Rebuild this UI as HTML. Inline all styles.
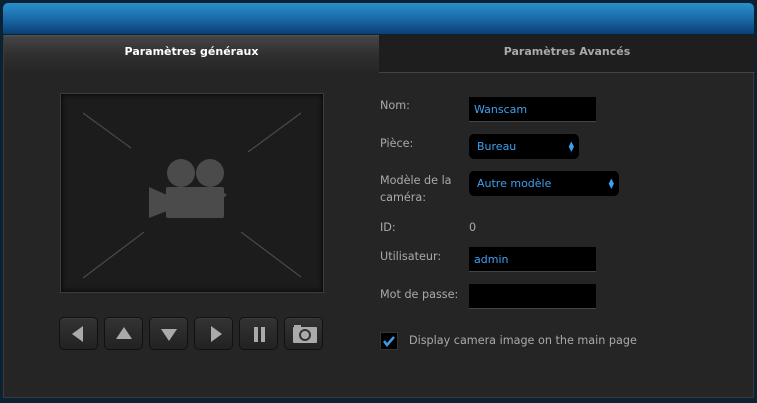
<!DOCTYPE html>
<html><head><style>
*{margin:0;padding:0;box-sizing:border-box}
body{width:757px;height:403px;background:#0b2233;position:relative;overflow:hidden;font-family:"DejaVu Sans","Liberation Sans",sans-serif;font-size:11px}
.hdr{position:absolute;left:3px;top:3px;width:751px;height:31px;border-radius:5px 5px 0 0;background:linear-gradient(#2a8fc8,#1a6aa8 50%,#0b3f75)}
.panel{position:absolute;left:3px;top:35px;width:751px;height:363px;background:#252525;border:1px solid #3a3a3a;border-top:none}
.t1{position:absolute;left:0;top:0;width:375px;height:37px;background:linear-gradient(#555 0,#444 2px,#2f2f2f 20px,#262626);color:#fff;font-weight:bold;text-align:center;line-height:34px;font-size:11px}
.t2{position:absolute;left:375px;top:0;width:376px;height:38px;background:#1e1e1e;border-bottom:1px solid #444;color:#aaa;font-weight:bold;text-align:center;line-height:34px;font-size:11px}
.cam{position:absolute;left:56px;top:58px;width:264px;height:200px;background:#1c1c1c;border:1px solid #3c3c3c;box-shadow:inset 0 0 6px #000}
.btn{position:absolute;top:282px;width:39px;height:33px;border-radius:5px;border:1px solid #111;background:linear-gradient(#333,#222);box-shadow:inset 0 1px 0 #3a3a3a}
.btn svg{position:absolute;left:0;top:0}
.lbl{position:absolute;left:377px;color:#aaa;font-size:11.2px;line-height:17px}
.in{position:absolute;left:469px;background:#000;color:#3fa0f0;font-size:11px;padding-left:5px;border-bottom:1px solid #444}
.sel{position:absolute;left:469px;background:#000;color:#3fa0f0;border-radius:5px;padding-left:8px;font-size:11px}
.arr{position:absolute;right:5px;top:50%;transform:translateY(-50%);font-size:7px;line-height:5px;color:#3fa0f0}
</style></head><body>
<div class="hdr"></div>
<div class="panel">
<div class="t1">Paramètres généraux</div>
<div class="t2">Paramètres Avancés</div>
<div class="cam"><svg width="264" height="200">
<g stroke="#4a4a4a" stroke-width="1.2"><line x1="22" y1="19" x2="70" y2="54"/><line x1="240" y1="19" x2="187" y2="58"/><line x1="22" y1="184" x2="83" y2="138"/><line x1="240" y1="183" x2="180" y2="138"/></g>
<g fill="#4b4b4b"><circle cx="120" cy="79" r="14"/><circle cx="149" cy="79" r="14"/><rect x="105" y="93" width="58" height="31" rx="2"/><polygon points="88,93 106,101 106,117 88,124"/><polygon points="162,98 166,101 162,104"/></g></svg></div>
<div class="btn" style="left:55px"><svg width="39" height="33"><polygon points="12,16 23,8 23,24" fill="#aaa"/></svg></div>
<div class="btn" style="left:100px"><svg width="39" height="33"><polygon points="19,9 27,21 11,21" fill="#aaa"/></svg></div>
<div class="btn" style="left:145px"><svg width="39" height="33"><polygon points="11,11 27,11 19,23" fill="#aaa"/></svg></div>
<div class="btn" style="left:190px"><svg width="39" height="33"><polygon points="16,8 27,16 16,24" fill="#aaa"/></svg></div>
<div class="btn" style="left:235px"><svg width="39" height="33"><rect x="14" y="9" width="4" height="15" fill="#aaa"/><rect x="21" y="9" width="4" height="15" fill="#aaa"/></svg></div>
<div class="btn" style="left:280px"><svg width="39" height="33"><rect x="8" y="9" width="24" height="16" rx="1" fill="#aaa"/><rect x="9" y="7" width="7" height="3" fill="#aaa"/><circle cx="20" cy="17" r="5" fill="none" stroke="#333" stroke-width="2"/></svg></div>
</div>
<div class="lbl" style="top:97px;left:380px">Nom:</div>
<div class="in" style="top:97px;width:127px;height:25px;line-height:25px">Wanscam</div>
<div class="lbl" style="top:135px;left:380px">Pièce:</div>
<div class="sel" style="top:134px;width:110px;height:25px;line-height:25px">Bureau<span class="arr">▲<br>▼</span></div>
<div class="lbl" style="top:172px;left:380px">Modèle de la<br>caméra:</div>
<div class="sel" style="top:171px;width:150px;height:25px;line-height:25px">Autre modèle<span class="arr">▲<br>▼</span></div>
<div class="lbl" style="top:219px;left:380px">ID:</div>
<div class="lbl" style="top:219px;left:469px">0</div>
<div class="lbl" style="top:248px;left:380px">Utilisateur:</div>
<div class="in" style="top:247px;width:127px;height:25px;line-height:25px">admin</div>
<div class="lbl" style="top:286px;left:380px">Mot de passe:</div>
<div class="in" style="top:284px;width:127px;height:25px"></div>
<div style="position:absolute;left:380px;top:332px;width:18px;height:18px;background:#000;border:1px solid #333"><svg width="16" height="16"><polyline points="3,8 6,12 13,4" fill="none" stroke="#3a9be8" stroke-width="2.5"/></svg></div>
<div class="lbl" style="top:332px;left:409px">Display camera image on the main page</div>
</body></html>
